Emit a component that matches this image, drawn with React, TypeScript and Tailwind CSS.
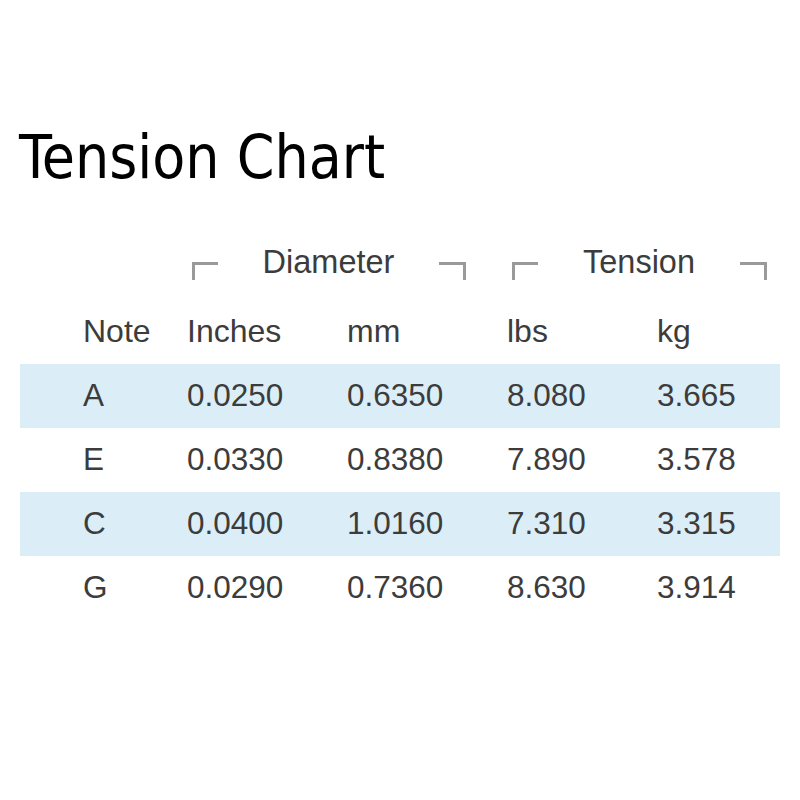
const ROWS = [
  { note: "A", inches: "0.0250", mm: "0.6350", lbs: "8.080", kg: "3.665" },
  { note: "E", inches: "0.0330", mm: "0.8380", lbs: "7.890", kg: "3.578" },
  { note: "C", inches: "0.0400", mm: "1.0160", lbs: "7.310", kg: "3.315" },
  { note: "G", inches: "0.0290", mm: "0.7360", lbs: "8.630", kg: "3.914" },
];

function GroupHeader({ label, width }: { label: string; width: string }) {
  return (
    <div className={`flex items-start h-full ${width}`}>
      <div className="mt-[24px] w-[26px] h-[18px] border-t-[3px] border-l-[3px] border-[#9a9a9a] shrink-0" />
      <div className="flex-1 h-full flex items-center justify-center leading-none">{label}</div>
      <div className="mt-[24px] w-[27px] h-[18px] border-t-[3px] border-r-[3px] border-[#9a9a9a] shrink-0" />
    </div>
  );
}

export default function App() {
  return (
    <div className="w-[800px] h-[800px] bg-white pt-[127px] overflow-hidden">
      <h1
        className="pl-[19px] text-[60px] leading-none text-black"
        style={{ fontFamily: '"DejaVu Sans Condensed", "DejaVu Sans", sans-serif', fontStretch: "condensed" }}
      >
        Tension Chart
      </h1>

      <div className="mt-[51px] mx-[20px] text-[#3c3c3c] font-['Liberation_Sans',Arial,sans-serif]">
        {/* group headings */}
        <div className="flex h-[48px] text-[32.5px]">
          <div className="w-[172px]" />
          <GroupHeader label="Diameter" width="w-[274px]" />
          <div className="w-[46px]" />
          <GroupHeader label="Tension" width="w-[255px]" />
        </div>

        {/* column headings */}
        <div className="mt-[12px] flex items-center h-[66px] text-[32px] leading-none pl-[63px]">
          <div className="w-[104px]">Note</div>
          <div className="w-[160px]">Inches</div>
          <div className="w-[160px]">mm</div>
          <div className="w-[150px]">lbs</div>
          <div>kg</div>
        </div>

        {/* data */}
        {ROWS.map((r, i) => (
          <div
            key={r.note}
            className={`flex items-center h-[64px] text-[31.5px] leading-none pl-[63px] ${
              i % 2 === 0 ? "bg-[#dbeef8]" : "bg-white"
            }`}
          >
            <div className="w-[104px]">{r.note}</div>
            <div className="w-[160px]">{r.inches}</div>
            <div className="w-[160px]">{r.mm}</div>
            <div className="w-[150px]">{r.lbs}</div>
            <div>{r.kg}</div>
          </div>
        ))}
      </div>
    </div>
  );
}
